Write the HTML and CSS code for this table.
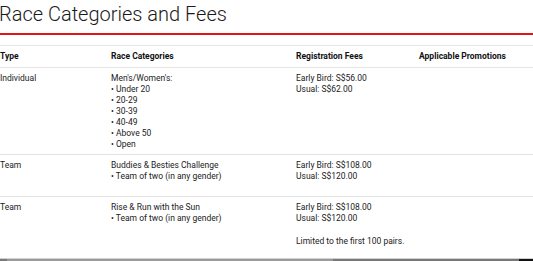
FILE: index.html
```html
<!DOCTYPE html>
<html lang="en">
<head>
    <meta charset="UTF-8">
    <title>Race Categories and Fees</title>
    <link rel="stylesheet" href="styles.css">
</head>
<body>
    <div class="page">
        <main class="content">
            <h2 class="section-title">Race Categories and Fees</h2>
            <table class="fees-table">
                <thead>
                    <tr>
                        <th class="col-type">Type</th>
                        <th class="col-cat">Race Categories</th>
                        <th class="col-fee">Registration Fees</th>
                        <th>Applicable Promotions</th>
                    </tr>
                </thead>
                <tbody>
                    <tr>
                        <td>Individual</td>
                        <td>
                            <p class="lead">Men's/Women's:</p>
                            <ul class="cats">
                                <li>Under 20</li>
                                <li>20-29</li>
                                <li>30-39</li>
                                <li>40-49</li>
                                <li>Above 50</li>
                                <li>Open</li>
                            </ul>
                        </td>
                        <td><p>Early Bird: S$56.00<br>Usual: S$62.00</p></td>
                        <td></td>
                    </tr>
                    <tr>
                        <td>Team</td>
                        <td>
                            <p class="lead">Buddies &amp; Besties Challenge</p>
                            <ul class="cats">
                                <li>Team of two (in any gender)</li>
                            </ul>
                        </td>
                        <td><p>Early Bird: S$108.00<br>Usual: S$120.00</p></td>
                        <td></td>
                    </tr>
                    <tr>
                        <td>Team</td>
                        <td>
                            <p class="lead">Rise &amp; Run with the Sun</p>
                            <ul class="cats">
                                <li>Team of two (in any gender)</li>
                            </ul>
                        </td>
                        <td>
                            <p>Early Bird: S$108.00<br>Usual: S$120.00</p>
                            <p class="note">Limited to the first 100 pairs.</p>
                        </td>
                        <td></td>
                    </tr>
                </tbody>
            </table>
        </main>
        <div class="scrollbar">
            <span class="seg seg-a"></span>
            <span class="seg seg-b"></span>
            <span class="seg seg-c"></span>
            <span class="seg seg-d"></span>
        </div>
    </div>
</body>
</html>
```

FILE: styles.css
```css
* {
    margin: 0;
    padding: 0;
    box-sizing: border-box;
}

body {
    background: #fff;
    color: #222;
    font-family: 'Roboto', 'Liberation Sans', sans-serif;
    font-size: 8.5px;
    line-height: 11px;
}

.page {
    height: 261px;
    display: flex;
    flex-direction: column;
    overflow: hidden;
}

.content {
    flex: 1;
    overflow: hidden;
}

.section-title {
    font-weight: 300;
    font-size: 20px;
    line-height: 24px;
    margin: 2px 0 0 -1px;
    padding-bottom: 7px;
    border-bottom: 2px solid #e2131b;
    color: #1a1a1a;
}

.fees-table {
    width: 100%;
    border-collapse: collapse;
    margin-top: 10px;
}

.fees-table th,
.fees-table td {
    text-align: left;
    vertical-align: top;
    padding: 5px 0 4px;
}

.fees-table th {
    font-weight: 700;
    color: #111;
    padding-bottom: 5px;
    border-top: 1px solid #e6e6e6;
    border-bottom: 1px solid #e6e6e6;
}

.fees-table td {
    border-bottom: 1px solid #e3e3e3;
}

.col-type { width: 111px; }
.col-cat { width: 185px; }
.col-fee { width: 123px; }

.fees-table td p {
    margin-bottom: 10px;
}

.fees-table td p.lead {
    margin-bottom: 0;
}

.fees-table td p.note {
    margin-top: 12px;
}

.cats {
    list-style: none;
}

.cats li::before {
    content: "\2022  ";
    white-space: pre;
}

.scrollbar {
    height: 3px;
    display: flex;
    border-top: 1px solid #d0d0d0;
    flex-shrink: 0;
}

.seg { display: block; height: 100%; }
.seg-a { width: 7px; background: #7a7a7a; }
.seg-b { width: 326px; background: #9a9a9a; }
.seg-c { width: 186px; background: #787878; }
.seg-d { flex: 1; background: #111; }
```
